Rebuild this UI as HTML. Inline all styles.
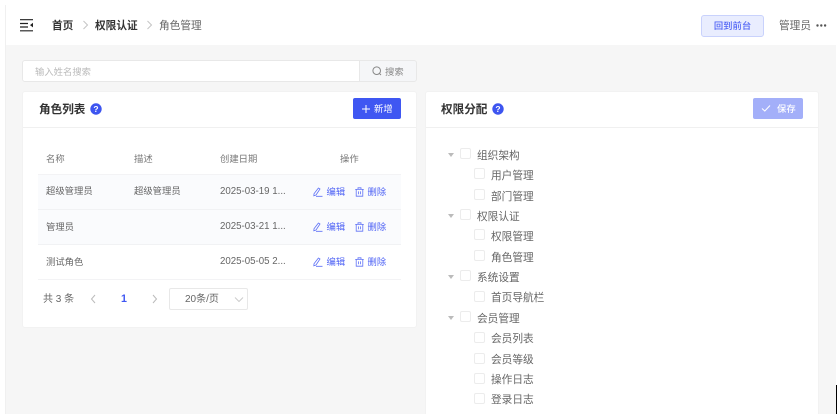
<!DOCTYPE html>
<html lang="zh">
<head>
<meta charset="utf-8">
<style>
*{box-sizing:border-box;margin:0;padding:0}
html,body{width:837px;height:414px;overflow:hidden;background:#fff;font-family:"Liberation Sans","Noto Sans CJK SC",sans-serif}
.a{position:absolute;white-space:nowrap}
#wrap{position:absolute;left:0;top:0;width:837px;height:414px;filter:blur(.3px)}
#main{position:absolute;left:5px;top:5px;width:831px;height:409px;background:#f6f6f6;border-left:1px solid #f0f0f0}
.t{font-size:9.33px;line-height:14px;color:#666}
.d{font-size:9.7px;line-height:14px;color:#666}
.l{font-size:10.67px;line-height:16px;color:#666}
.cb{position:absolute;width:11px;height:11px;border:1px solid #ececec;border-radius:2px;background:#fff}
.op{font-size:9.33px;line-height:14px;color:#4f63f5}
</style>
</head>
<body>
<div id="wrap">
<div id="main"></div>
<!-- header -->
<div class="a" style="left:6px;top:5px;width:830px;height:40px;background:#fff"></div>
<svg class="a" style="left:20px;top:19px" width="14" height="13" viewBox="0 0 14 13"><path d="M0 .7H13M0 4.5H8M0 8H8M0 11.8H13" stroke="#222" stroke-width="1.2" fill="none"/><path d="M13 3.8V8.4L10 6.1Z" fill="#222"/></svg>
<div class="a" style="left:52px;top:18px;font-size:10.67px;line-height:16px;color:#333;font-weight:700">首页</div>
<svg class="a" style="left:82px;top:20px" width="7" height="10" viewBox="0 0 7 10"><path d="M1.5 1L5.5 5L1.5 9" stroke="#c4c4c4" fill="none"/></svg>
<div class="a" style="left:95px;top:18px;font-size:10.67px;line-height:16px;color:#333;font-weight:700">权限认证</div>
<svg class="a" style="left:146px;top:20px" width="7" height="10" viewBox="0 0 7 10"><path d="M1.5 1L5.5 5L1.5 9" stroke="#c4c4c4" fill="none"/></svg>
<div class="a" style="left:159px;top:18px;font-size:10.67px;line-height:16px;color:#666">角色管理</div>
<div class="a" style="left:701px;top:15px;width:63px;height:22px;background:#e9edfe;border:1px solid #c9d2fc;border-radius:3px;font-size:9.33px;line-height:21px;color:#4f63f5;text-align:center;font-weight:500">回到前台</div>
<div class="a" style="left:779px;top:18px;font-size:10.67px;line-height:16px;color:#666">管理员</div>
<svg class="a" style="left:816px;top:23px" width="11" height="5" viewBox="0 0 11 5"><circle cx="1.5" cy="2.5" r="1.2" fill="#555"/><circle cx="5.3" cy="2.5" r="1.2" fill="#555"/><circle cx="9.1" cy="2.5" r="1.2" fill="#555"/></svg>

<!-- search -->
<div class="a" style="left:22px;top:60px;width:338px;height:22px;background:#fff;border:1px solid #e8e8e8;border-radius:3px 0 0 3px;font-size:9.33px;line-height:22px;color:#bbb;padding-left:12px">输入姓名搜索</div>
<div class="a" style="left:359px;top:60px;width:58px;height:22px;background:#f5f6f8;border:1px solid #e8e8e8;border-radius:0 3px 3px 0;font-size:9.33px;line-height:22px;color:#888;padding-left:25px">搜索</div>
<svg class="a" style="left:371px;top:65px" width="12" height="12" viewBox="0 0 12 12"><circle cx="5.7" cy="5.7" r="3.8" stroke="#888" fill="none"/><path d="M8.5 8.5L10 10" stroke="#888" fill="none"/></svg>

<!-- left card -->
<div class="a" style="left:22px;top:91px;width:395px;height:237px;background:#fff;border-radius:3px;border:1px solid #f2f2f2"></div>
<div class="a" style="left:23px;top:127px;width:393px;height:1px;background:#f0f0f0"></div>
<div class="a" style="left:39px;top:101px;font-size:11.6px;line-height:18px;color:#333;font-weight:700">角色列表</div>
<svg class="a" style="left:90px;top:103px" width="12" height="12" viewBox="0 0 12 12"><circle cx="6" cy="6" r="5.7" fill="#3d55f0"/><text x="6" y="9" font-size="8.5" font-weight="700" fill="#fff" text-anchor="middle" font-family="Liberation Sans">?</text></svg>
<div class="a" style="left:353px;top:98px;width:48px;height:21px;background:#3f57f2;border-radius:2px;font-size:9.33px;line-height:22px;color:#fff;padding-left:21px">新增</div>
<svg class="a" style="left:361px;top:104px" width="10" height="10" viewBox="0 0 10 10"><path d="M5 1V9M1 5H9" stroke="#fff" fill="none"/></svg>

<!-- table -->
<div class="a" style="left:38px;top:175px;width:363px;height:70px;background:#fafbfd"></div>
<div class="a" style="left:38px;top:174px;width:363px;height:1px;background:#f3f3f5"></div>
<div class="a" style="left:38px;top:209px;width:363px;height:1px;background:#f1f2f4"></div>
<div class="a" style="left:38px;top:244px;width:363px;height:1px;background:#f1f2f4"></div>
<div class="a" style="left:38px;top:279px;width:363px;height:1px;background:#f3f3f5"></div>

<div class="a t" style="left:46px;top:152px;color:#777">名称</div>
<div class="a t" style="left:134px;top:152px;color:#777">描述</div>
<div class="a t" style="left:220px;top:152px;color:#777">创建日期</div>
<div class="a t" style="left:340px;top:152px;color:#777">操作</div>

<div class="a t" style="left:46px;top:184px">超级管理员</div>
<div class="a t" style="left:134px;top:184px">超级管理员</div>
<div class="a d" style="left:220px;top:185px">2025-03-19 1...</div>
<div class="a t" style="left:46px;top:220px">管理员</div>
<div class="a d" style="left:220px;top:220px">2025-03-21 1...</div>
<div class="a t" style="left:46px;top:255px">测试角色</div>
<div class="a d" style="left:220px;top:255px">2025-05-05 2...</div>

<div class="a op" style="left:326.5px;top:185px">编辑</div><div class="a op" style="left:367.5px;top:185px">删除</div>
<div class="a op" style="left:326.5px;top:220px">编辑</div><div class="a op" style="left:367.5px;top:220px">删除</div>
<div class="a op" style="left:326.5px;top:255px">编辑</div><div class="a op" style="left:367.5px;top:255px">删除</div>

<svg class="a" style="left:313px;top:187px" width="10" height="10" viewBox="0 0 10 10"><path d="M1 6.8L5.4 1L7 2L3 8L.8 8.8ZM3 9.3H9.5" stroke="#5f72f6" stroke-width=".8" fill="none"/></svg>
<svg class="a" style="left:354.5px;top:186.5px" width="9" height="10" viewBox="0 0 9 10"><path d="M.2 2.4H8.8M3 2.2V.8H6V2.2M1.2 2.4V9.2H7.8V2.4M3.4 4.4V7.2M5.6 4.4V7.2" stroke="#5f72f6" stroke-width=".8" fill="none"/></svg>
<svg class="a" style="left:313px;top:222px" width="10" height="10" viewBox="0 0 10 10"><path d="M1 6.8L5.4 1L7 2L3 8L.8 8.8ZM3 9.3H9.5" stroke="#5f72f6" stroke-width=".8" fill="none"/></svg>
<svg class="a" style="left:354.5px;top:221.5px" width="9" height="10" viewBox="0 0 9 10"><path d="M.2 2.4H8.8M3 2.2V.8H6V2.2M1.2 2.4V9.2H7.8V2.4M3.4 4.4V7.2M5.6 4.4V7.2" stroke="#5f72f6" stroke-width=".8" fill="none"/></svg>
<svg class="a" style="left:313px;top:257px" width="10" height="10" viewBox="0 0 10 10"><path d="M1 6.8L5.4 1L7 2L3 8L.8 8.8ZM3 9.3H9.5" stroke="#5f72f6" stroke-width=".8" fill="none"/></svg>
<svg class="a" style="left:354.5px;top:256.5px" width="9" height="10" viewBox="0 0 9 10"><path d="M.2 2.4H8.8M3 2.2V.8H6V2.2M1.2 2.4V9.2H7.8V2.4M3.4 4.4V7.2M5.6 4.4V7.2" stroke="#5f72f6" stroke-width=".8" fill="none"/></svg>

<!-- pagination -->
<div class="a" style="left:43px;top:292px;font-size:10px;line-height:16px;color:#666">共 3 条</div>
<svg class="a" style="left:90px;top:294px" width="7" height="10" viewBox="0 0 7 10"><path d="M5 1L1.5 5L5 9" stroke="#bbb" fill="none"/></svg>
<div class="a" style="left:121px;top:291px;font-size:10.67px;line-height:16px;color:#3f57f2;font-weight:700">1</div>
<svg class="a" style="left:151px;top:294px" width="7" height="10" viewBox="0 0 7 10"><path d="M2 1L5.5 5L2 9" stroke="#bbb" fill="none"/></svg>
<div class="a" style="left:169px;top:288px;width:79px;height:22px;border:1px solid #e8e8e8;border-radius:2px;background:#fff;font-size:10px;line-height:21px;color:#666;padding-left:15px">20条/页</div>
<svg class="a" style="left:234px;top:296px" width="10" height="7" viewBox="0 0 10 7"><path d="M1 1.5L5 5.5L9 1.5" stroke="#ccc" fill="none"/></svg>

<!-- right card -->
<div class="a" style="left:425px;top:91px;width:394px;height:323px;background:#fff;border-radius:3px 3px 0 0;border:1px solid #f2f2f2;border-bottom:0"></div>
<div class="a" style="left:426px;top:127px;width:392px;height:1px;background:#f0f0f0"></div>
<div class="a" style="left:441px;top:101px;font-size:11.6px;line-height:18px;color:#333;font-weight:700">权限分配</div>
<svg class="a" style="left:492px;top:103px" width="12" height="12" viewBox="0 0 12 12"><circle cx="6" cy="6" r="5.7" fill="#3d55f0"/><text x="6" y="9" font-size="8.5" font-weight="700" fill="#fff" text-anchor="middle" font-family="Liberation Sans">?</text></svg>
<div class="a" style="left:753px;top:98px;width:50px;height:21px;background:#a3aff9;border-radius:2px;font-size:9.33px;line-height:22px;color:#fff;padding-left:24px;font-weight:500">保存</div>
<svg class="a" style="left:761px;top:104px" width="10" height="9" viewBox="0 0 10 9"><path d="M1 4.5L3.8 7L9 1.5" stroke="#fff" fill="none"/></svg>

<!-- tree -->
<svg class="a" style="left:447px;top:152px" width="8" height="6" viewBox="0 0 8 6"><path d="M1 1H7L4 5Z" fill="#bbb"/></svg>
<div class="cb" style="left:460px;top:148px"></div><div class="a l" style="left:477px;top:148px">组织架构</div>
<div class="cb" style="left:474px;top:168px"></div><div class="a l" style="left:491px;top:168px">用户管理</div>
<div class="cb" style="left:474px;top:189px"></div><div class="a l" style="left:491px;top:189px">部门管理</div>
<svg class="a" style="left:447px;top:213px" width="8" height="6" viewBox="0 0 8 6"><path d="M1 1H7L4 5Z" fill="#bbb"/></svg>
<div class="cb" style="left:460px;top:209px"></div><div class="a l" style="left:477px;top:209px">权限认证</div>
<div class="cb" style="left:474px;top:229px"></div><div class="a l" style="left:491px;top:229px">权限管理</div>
<div class="cb" style="left:474px;top:250px"></div><div class="a l" style="left:491px;top:250px">角色管理</div>
<svg class="a" style="left:447px;top:274px" width="8" height="6" viewBox="0 0 8 6"><path d="M1 1H7L4 5Z" fill="#bbb"/></svg>
<div class="cb" style="left:460px;top:270px"></div><div class="a l" style="left:477px;top:270px">系统设置</div>
<div class="cb" style="left:474px;top:291px"></div><div class="a l" style="left:491px;top:290px">首页导航栏</div>
<svg class="a" style="left:447px;top:315px" width="8" height="6" viewBox="0 0 8 6"><path d="M1 1H7L4 5Z" fill="#bbb"/></svg>
<div class="cb" style="left:460px;top:311px"></div><div class="a l" style="left:477px;top:311px">会员管理</div>
<div class="cb" style="left:474px;top:332px"></div><div class="a l" style="left:491px;top:331px">会员列表</div>
<div class="cb" style="left:474px;top:353px"></div><div class="a l" style="left:491px;top:352px">会员等级</div>
<div class="cb" style="left:474px;top:373px"></div><div class="a l" style="left:491px;top:372px">操作日志</div>
<div class="cb" style="left:474px;top:393px"></div><div class="a l" style="left:491px;top:392px">登录日志</div>
</div>
<div class="a" style="left:836px;top:385px;width:1px;height:29px;background:#000"></div>
</body>
</html>
